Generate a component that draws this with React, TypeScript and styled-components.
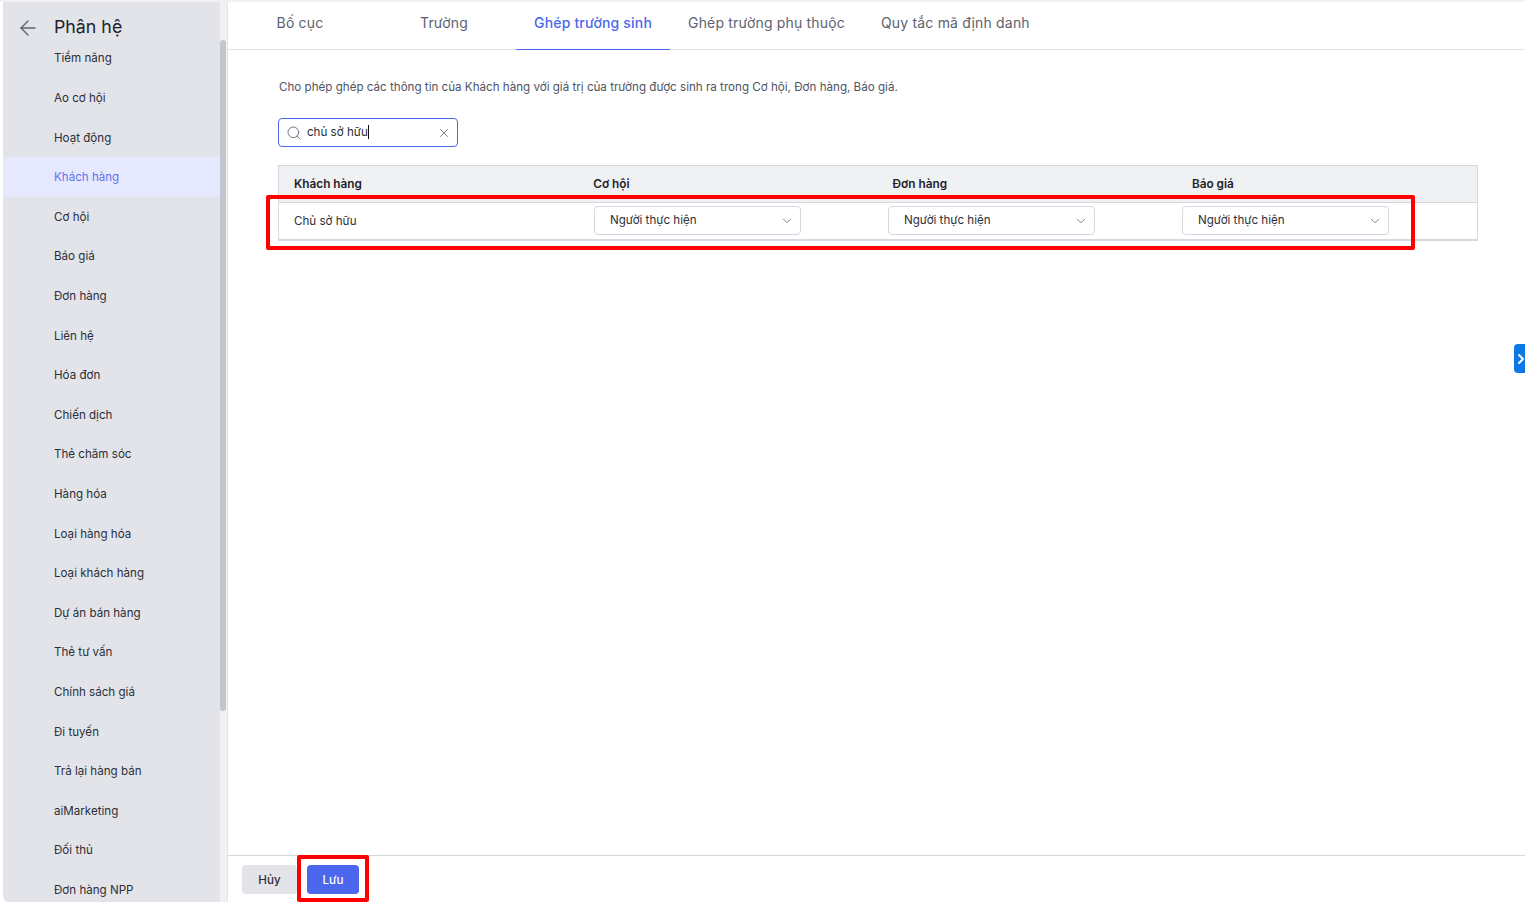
import React from 'react'
import styled, { createGlobalStyle } from 'styled-components'
import { ArrowLeft, ChevronDown, ChevronRight, Search, X } from 'lucide-react'

const GlobalStyle = createGlobalStyle`
  html, body {
    margin: 0;
    height: 100%;
    overflow: hidden;
    background: #ffffff;
  }
  body {
    font-family: Inter, "Noto Sans", sans-serif;
    color: #1f2229;
  }
  * {
    box-sizing: border-box;
  }
`

const Page = styled.div`
  position: relative;
  display: flex;
  width: 1525px;
  height: 902px;
  overflow: hidden;
  &::before {
    content: '';
    position: absolute;
    top: 0;
    left: 0;
    right: 0;
    height: 2px;
    background: #f1f1f3;
  }
`

const Sidebar = styled.aside`
  display: flex;
  flex: none;
  width: 225px;
  height: 100%;
  margin-left: 3px;
  border-right: 1px solid #e2e4e9;
  background: #f1f1f2;
  border-bottom-left-radius: 6px;
  overflow: hidden;
`

const SidePanel = styled.div`
  flex: none;
  width: 217px;
  background: #e2e4e9;
  overflow: hidden;
`

const SideHeader = styled.div`
  display: flex;
  align-items: center;
  height: 38.7px;
  padding: 16px 0 0 13px;
  color: #5c6270;
`

const BackArrow = styled(ArrowLeft)`
  flex: none;
  margin-top: 2px;
`

const SideTitle = styled.span`
  margin-left: 14px;
  color: #1f2229;
  font-size: 17.8px;
  line-height: 22px;
`

const MenuItem = styled.div<{ $active?: boolean }>`
  display: flex;
  align-items: center;
  height: 39.6px;
  padding-left: 51px;
  font-size: 11.6px;
  color: ${(p) => (p.$active ? '#6272f0' : '#2b2f38')};
  background: ${(p) => (p.$active ? '#e6e9fe' : 'transparent')};
`

const ScrollTrack = styled.div`
  flex: 1;
  padding-top: 40px;
`

const ScrollThumb = styled.div`
  width: 6px;
  height: 671px;
  border-radius: 3px;
  background: #c2c6cf;
`

const Main = styled.main`
  display: flex;
  flex: 1;
  flex-direction: column;
  min-width: 0;
`

const Tabs = styled.nav`
  display: flex;
  flex: none;
  height: 50px;
  border-bottom: 1px solid #e2e4e9;
`

const Tab = styled.div<{ $active?: boolean; $wide?: boolean }>`
  display: flex;
  justify-content: center;
  height: 50px;
  min-width: ${(p) => (p.$wide ? '0' : '144px')};
  padding: 14px 18px 0;
  font-size: 14px;
  line-height: 18px;
  letter-spacing: 0.18px;
  font-weight: ${(p) => (p.$active ? 500 : 400)};
  color: ${(p) => (p.$active ? '#4a67ee' : '#5c6270')};
  border-bottom: ${(p) => (p.$active ? '1px solid #4a67ee' : 'none')};
`

const Content = styled.section`
  flex: 1;
  padding: 30px 47px 0 50px;
`

const Description = styled.p`
  margin: 0 0 0 1px;
  font-size: 11.62px;
  line-height: 15px;
  color: #4f5563;
`

const SearchBox = styled.div`
  display: flex;
  align-items: center;
  width: 180px;
  height: 29px;
  margin-top: 23px;
  padding: 0 6px 0 7px;
  border: 1px solid #4a67ee;
  border-radius: 4px;
  color: #5c6270;
`

const SearchText = styled.span`
  flex: 1;
  margin: 0 0 2px 5px;
  font-size: 11.6px;
  color: #2b2f38;
`

const Caret = styled.span`
  display: inline-block;
  width: 1px;
  height: 14px;
  margin-bottom: -3px;
  background: #111111;
`

const Table = styled.div`
  width: 1200px;
  margin-top: 18px;
  border: 1px solid #d5d8de;
  border-bottom-width: 2px;
`

const HeadRow = styled.div`
  display: grid;
  grid-template-columns: repeat(4, 299.3px);
  height: 37px;
  padding-top: 11px;
  background: #f0f1f3;
  border-bottom: 1px solid #d5d8de;
`

const HeadCell = styled.div`
  padding-left: 15px;
  font-size: 11.8px;
  line-height: 15px;
  font-weight: 600;
  color: #1f2229;
`

const BodyRow = styled.div`
  display: grid;
  grid-template-columns: 315px repeat(3, 294px);
  align-items: center;
  height: 36px;
`

const NameCell = styled.div`
  padding-left: 15px;
  font-size: 11.6px;
  color: #2b2f38;
`

const Select = styled.div`
  display: flex;
  align-items: center;
  justify-content: space-between;
  width: 207px;
  height: 29px;
  margin-top: -1px;
  padding: 0 6px 0 15px;
  border: 1px solid #d5d8de;
  border-radius: 4px;
  font-size: 11.6px;
  color: #2b2f38;
  svg {
    color: #6b7080;
  }
`

const SelectValue = styled.span`
  margin-bottom: 2px;
`

const Footer = styled.footer`
  display: flex;
  flex: none;
  gap: 10px;
  height: 47px;
  padding: 9px 0 0 14px;
  border-top: 1px solid #d5d8de;
`

const Button = styled.button<{ $primary?: boolean }>`
  width: ${(p) => (p.$primary ? '52px' : '55px')};
  height: 29px;
  border: none;
  border-radius: 4px;
  font-family: inherit;
  font-size: 11.6px;
  font-weight: 500;
  color: ${(p) => (p.$primary ? '#ffffff' : '#2b2f38')};
  background: ${(p) => (p.$primary ? '#4a67ee' : '#e2e4e9')};
`

const RedFrame = styled.div<{ $x: number; $y: number; $w: number; $h: number }>`
  position: absolute;
  left: ${(p) => p.$x}px;
  top: ${(p) => p.$y}px;
  width: ${(p) => p.$w}px;
  height: ${(p) => p.$h}px;
  border: 4px solid #ff0000;
  border-radius: 2px;
  pointer-events: none;
`

const SideHandle = styled.div`
  position: absolute;
  top: 344px;
  right: 0;
  display: flex;
  align-items: center;
  justify-content: flex-end;
  width: 11px;
  height: 29px;
  border-radius: 4px 0 0 4px;
  background: #0b78e6;
  color: #ffffff;
  overflow: hidden;
  svg {
    flex: none;
    margin-right: -4px;
  }
`

const modules = [
  'Tiềm năng',
  'Ao cơ hội',
  'Hoạt động',
  'Khách hàng',
  'Cơ hội',
  'Báo giá',
  'Đơn hàng',
  'Liên hệ',
  'Hóa đơn',
  'Chiến dịch',
  'Thẻ chăm sóc',
  'Hàng hóa',
  'Loại hàng hóa',
  'Loại khách hàng',
  'Dự án bán hàng',
  'Thẻ tư vấn',
  'Chính sách giá',
  'Đi tuyến',
  'Trả lại hàng bán',
  'aiMarketing',
  'Đối thủ',
  'Đơn hàng NPP',
]

const tabs = ['Bố cục', 'Trường', 'Ghép trường sinh', 'Ghép trường phụ thuộc', 'Quy tắc mã định danh']

export default function App() {
  return (
    <Page>
      <GlobalStyle />
      <Sidebar>
        <SidePanel>
          <SideHeader>
            <BackArrow size={24} strokeWidth={1.4} />
            <SideTitle>Phân hệ</SideTitle>
          </SideHeader>
          {modules.map((name) => (
            <MenuItem key={name} $active={name === 'Khách hàng'}>
              {name}
            </MenuItem>
          ))}
        </SidePanel>
        <ScrollTrack>
          <ScrollThumb />
        </ScrollTrack>
      </Sidebar>
      <Main>
        <Tabs>
          {tabs.map((name, i) => (
            <Tab key={name} $active={i === 2} $wide={i > 1}>
              {name}
            </Tab>
          ))}
        </Tabs>
        <Content>
          <Description>
            Cho phép ghép các thông tin của Khách hàng với giá trị của trường được sinh ra trong Cơ hội, Đơn hàng, Báo giá.
          </Description>
          <SearchBox>
            <Search size={16} strokeWidth={1.3} />
            <SearchText>
              chủ sở hữu
              <Caret />
            </SearchText>
            <X size={14} strokeWidth={1.4} />
          </SearchBox>
          <Table>
            <HeadRow>
              <HeadCell>Khách hàng</HeadCell>
              <HeadCell>Cơ hội</HeadCell>
              <HeadCell>Đơn hàng</HeadCell>
              <HeadCell>Báo giá</HeadCell>
            </HeadRow>
            <BodyRow>
              <NameCell>Chủ sở hữu</NameCell>
              {[0, 1, 2].map((i) => (
                <Select key={i}>
                  <SelectValue>Người thực hiện</SelectValue>
                  <ChevronDown size={14} strokeWidth={1.5} />
                </Select>
              ))}
            </BodyRow>
          </Table>
        </Content>
        <Footer>
          <Button>Hủy</Button>
          <Button $primary>Lưu</Button>
        </Footer>
      </Main>
      <RedFrame $x={266} $y={195} $w={1149} $h={55} />
      <RedFrame $x={297} $y={855} $w={72} $h={47} />
      <SideHandle>
        <ChevronRight size={16} strokeWidth={3} />
      </SideHandle>
    </Page>
  )
}
